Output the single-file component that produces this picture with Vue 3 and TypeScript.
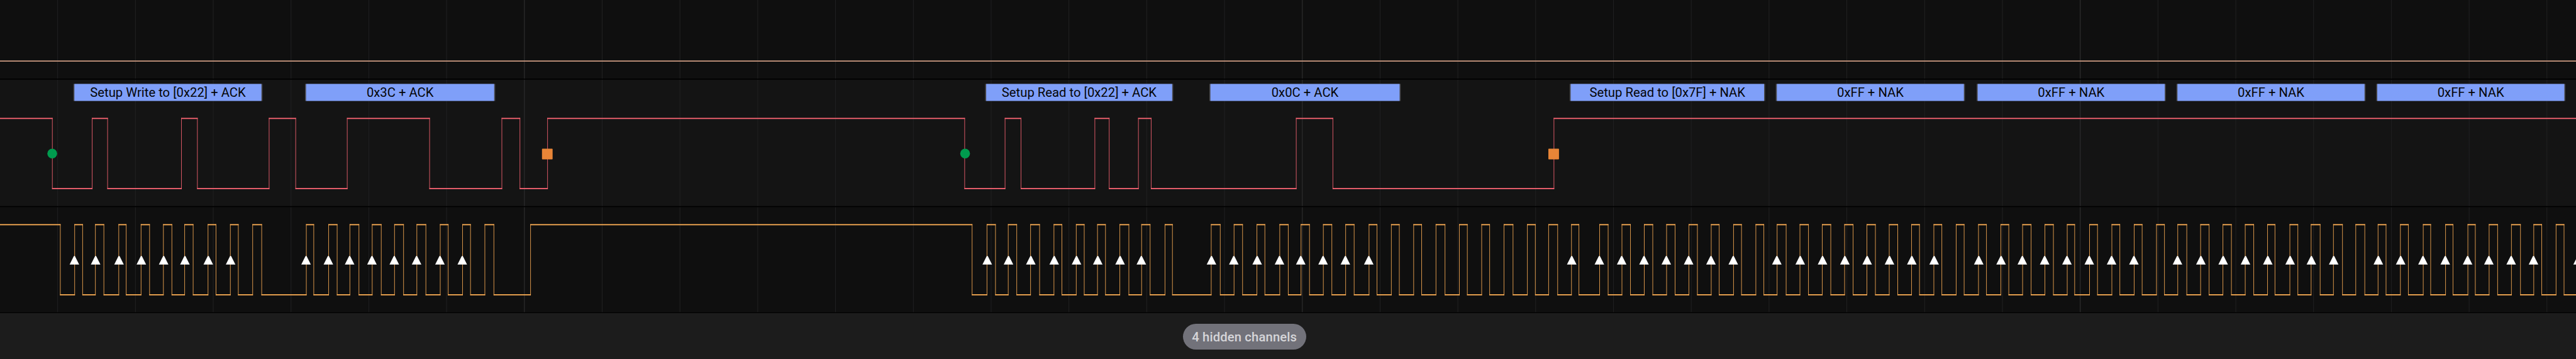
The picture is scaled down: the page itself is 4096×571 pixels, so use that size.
<script setup lang="ts">
interface Frame {
  start: number
  end: number
  text: string
}

const frames: Frame[] = [
  { start: 138, end: 494, text: 'Setup Write to [0x22] + ACK' },
  { start: 574, end: 932, text: '0x3C + ACK' },
  { start: 1854, end: 2208, text: 'Setup Read to [0x22] + ACK' },
  { start: 2276, end: 2636, text: '0x0C + ACK' },
  { start: 2954, end: 3322, text: 'Setup Read to [0x7F] + NAK' },
  { start: 3342, end: 3698, text: '0xFF + NAK' },
  { start: 3720, end: 4076, text: '0xFF + NAK' },
  { start: 4096, end: 4452, text: '0xFF + NAK' },
  { start: 4472, end: 4828, text: '0xFF + NAK' },
]

const WIDTH = 4848

// Edge positions; both lines idle high, so the first edge of each is falling.
const dataEdges: number[] = [
  98, 173, 202, 341, 371, 506, 556, 653, 808, 944, 978, 1030,
  1815, 1891, 1921, 2060, 2087, 2142, 2166, 2439, 2508, 2924,
]
const clockEdges: number[] = [
  113, 140, 155, 179, 195, 223, 237, 265, 281, 307, 323, 347, 363, 391, 406, 433, 448, 475, 492,
  576, 590, 618, 634, 658, 675, 700, 717, 742, 759, 784, 801, 828, 843, 870, 885, 912, 929, 998,
  1829, 1857, 1873, 1897, 1913, 1939, 1956, 1983, 1998, 2025, 2040, 2065, 2080, 2107, 2124, 2148, 2164, 2192, 2206,
  2279, 2296, 2322, 2338, 2365, 2380, 2408, 2424, 2448, 2464, 2490, 2506, 2532, 2548, 2576, 2591,
  2618, 2633, 2660, 2675, 2702, 2719, 2746, 2761, 2788, 2803, 2830, 2847, 2874, 2889, 2914, 2931,
  2957, 2971, 3010, 3026, 3052, 3068, 3094, 3110, 3136, 3152, 3178, 3194, 3220, 3235, 3262, 3277, 3304, 3319,
  3344, 3361, 3387, 3403, 3429, 3445, 3471, 3487, 3513, 3529, 3555, 3571, 3597, 3612, 3639, 3654, 3681, 3696,
  3723, 3738, 3765, 3780, 3806, 3822, 3848, 3864, 3890, 3904, 3932, 3947, 3974, 3989, 4016, 4031, 4058, 4073,
  4098, 4115, 4141, 4157, 4183, 4199, 4225, 4241, 4267, 4281, 4309, 4324, 4349, 4366, 4391, 4408, 4433, 4450,
  4475, 4490, 4517, 4532, 4560, 4574, 4602, 4616, 4644, 4658, 4684, 4700, 4726, 4743, 4768, 4783, 4810, 4825,
]

// Rising clock edges that do not sample a data bit (ACK slots and idle pulses).
const unsampled = new Set<number>([
  475, 912, 998, 2192, 2618, 2660, 2702, 2746, 2788, 2830, 2874, 2914, 3304, 3681, 4058, 4433, 4810,
])

const snap = (x: number): number => 2 * Math.round(x / 2)

function levels(edges: number[], high: number, low: number): string {
  const stops = [0, ...edges, WIDTH]
  return stops
    .slice(0, -1)
    .map((x, i) => `M${x} ${i % 2 === 0 ? high : low}H${stops[i + 1] + 1}`)
    .join('')
}

function transitions(edges: number[], high: number, low: number): string {
  return edges.map((x) => `M${x + 0.5} ${high - 1}V${low + 1}`).join('')
}

const samples: number[] = [
  ...clockEdges.filter((x, i) => i % 2 === 1 && !unsampled.has(x)).map(snap),
  4852,
]
const arrows = samples.map((x) => `M${x - 9} 498L${x - 1} 482H${x + 1}L${x + 9} 498Z`).join('')

const grid = Array.from({ length: 33 }, (_, i) => ({ x: 108.5 + i * 146.4, major: i % 10 === 6 }))
const starts = [98, 1816]
const stops = [1030, 2924]
</script>

<template>
  <main class="analyzer">
    <svg class="tracks" viewBox="0 0 4848 590" preserveAspectRatio="none">
      <rect class="lane" width="4848" height="148" />
      <rect class="lane alt" y="150" width="4848" height="238" />
      <rect class="lane" y="390" width="4848" height="198" />
      <line
        v-for="g in grid"
        :key="g.x"
        class="grid"
        :class="{ major: g.major }"
        :x1="g.x"
        :x2="g.x"
        y1="0"
        y2="588"
      />
      <path class="divider" d="M0 149H4848M0 389H4848M0 589H4848" />

      <path class="flat" d="M0 115H4848" />

      <g v-for="f in frames" :key="f.start">
        <rect class="frame-edge" :x="f.start" y="158" :width="f.end - f.start" height="32" />
        <rect class="frame" :x="f.start + 2" y="158" :width="f.end - f.start - 4" height="32" />
        <text class="frame-text" :x="(f.start + f.end) / 2" y="182.4">{{ f.text }}</text>
      </g>

      <path class="data level" :d="levels(dataEdges, 223, 355)" />
      <path class="data" :d="transitions(dataEdges, 223, 355)" />
      <circle v-for="x in starts" :key="x" class="start" :cx="x + 0.3" cy="289" r="9.2" />
      <rect v-for="x in stops" :key="x" class="stop" :x="x - 10" y="280" width="20" height="20" rx="1" />

      <path class="clock level" :d="levels(clockEdges, 423, 555)" />
      <path class="clock" :d="transitions(clockEdges, 423, 555)" />
      <path class="arrow" :d="arrows" />
    </svg>
    <footer class="footer">
      <button class="pill" type="button">4 hidden channels</button>
    </footer>
  </main>
</template>

<style>
body {
  margin: 0;
  overflow: hidden;
  background: #1c1c1c;
}
</style>

<style scoped>
.analyzer {
  display: flex;
  flex-direction: column;
  width: 4096px;
  height: 571px;
  overflow: hidden;
  background: #1c1c1c;
  font-family: Roboto, "Liberation Sans", sans-serif;
}
.tracks {
  display: block;
  flex: none;
  width: 4096px;
  height: 498.48px;
}
.lane {
  fill: #0f0f0f;
}
.lane.alt {
  fill: #141414;
}
.grid {
  stroke: #212122;
  stroke-width: 1.2;
}
.grid.major {
  stroke: #2a2a2b;
  stroke-width: 1.6;
}
.divider {
  stroke: #000;
  stroke-width: 2;
}
.flat {
  stroke: #cd9b82;
  stroke-width: 2;
}
.frame-edge {
  fill: #48484c;
}
.frame {
  fill: #7f9ff9;
}
.frame-text {
  fill: #050608;
  font-size: 24px;
  text-anchor: middle;
}
.data,
.clock {
  fill: none;
  stroke-width: 1;
}
.data {
  stroke: #ff6675;
}
.clock {
  stroke: #ffb055;
}
.level {
  stroke-width: 2;
}
.start {
  fill: #009b4e;
}
.stop {
  fill: #e88537;
}
.arrow {
  fill: #fff;
}
.footer {
  display: flex;
  flex: 1;
  align-items: flex-start;
  justify-content: center;
  padding: 17px 138.6px 0 0;
  box-sizing: border-box;
}
.pill {
  height: 40.5px;
  width: 196px;
  padding: 0;
  border: 0;
  border-radius: 21px;
  background: #72727a;
  color: #d6d6d9;
  font: 500 20.28px/40px Roboto, "Liberation Sans", sans-serif;
  letter-spacing: 0.12px;
  white-space: nowrap;
}
</style>
